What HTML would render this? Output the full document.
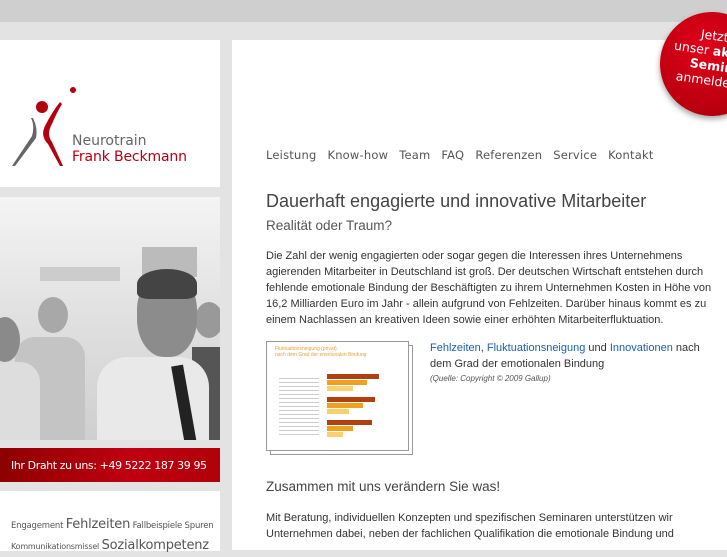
<!DOCTYPE html>
<html><head><meta charset="utf-8"><style>
*{margin:0;padding:0;box-sizing:border-box}
body{width:727px;height:545px;overflow:hidden;background:#e3e3e3;font-family:"Liberation Sans",sans-serif;position:relative}
.top{position:absolute;left:0;top:0;width:727px;height:22px;background:#cfcfcf}
.box{position:absolute;background:#fff}
.nav{position:absolute;left:266px;top:148px;color:#555;letter-spacing:.2px;font-family:"DejaVu Sans",sans-serif;font-size:11.5px}
.nav span{margin-right:11px}
h1{position:absolute;left:266px;top:191px;font-size:18px;font-weight:normal;color:#444}
h2{position:absolute;left:266px;top:218px;font-size:13.5px;font-weight:normal;color:#555}
p{position:absolute;left:266px;font-size:11px;line-height:16px;color:#333}
a{color:#1b5fa8;text-decoration:none}
</style></head><body>
<div class="top"></div>
<div class="box" style="left:0;top:40px;width:220px;height:147px">
<svg width="220" height="147" style="position:absolute;left:0;top:0">
<circle cx="73" cy="50" r="3" fill="#b30010"/>
<circle cx="42" cy="67" r="6" fill="#b30010"/>
<path d="M31 78 Q35 86 32 96 L12 126 L15 126 L36 98 Q38 88 33 78Z" fill="#666"/>
<path d="M60 62 Q52 72 45 86 Q40 96 48 104 L60 126 L63 126 L52 102 Q46 94 52 84 Q56 74 62 64Z" fill="#b30010"/>
<text x="72" y="105" font-family="DejaVu Sans,sans-serif" font-size="14" fill="#666">Neurotrain</text>
<text x="72" y="121" font-family="DejaVu Sans,sans-serif" font-size="14" fill="#b30010" textLength="115">Frank Beckmann</text>
</svg></div>
<div class="box" style="left:0;top:197px;width:220px;height:243px;background:linear-gradient(180deg,#f4f4f4,#e0e0e0 50%,#cfcfcf);overflow:hidden">
<div style="position:absolute;left:142px;top:50px;width:55px;height:30px;background:#bbb"></div>
<div style="position:absolute;left:40px;top:70px;width:80px;height:14px;background:#ccc"></div>
<div style="position:absolute;left:38px;top:100px;width:30px;height:36px;border-radius:50%;background:#a8a8a8"></div>
<div style="position:absolute;left:15px;top:140px;width:70px;height:110px;border-radius:20px 20px 0 0;background:#c4c4c4"></div>
<div style="position:absolute;left:-10px;top:120px;width:30px;height:45px;border-radius:50%;background:#8a8a8a"></div>
<div style="position:absolute;left:-10px;top:165px;width:50px;height:90px;border-radius:20px 20px 0 0;background:#ddd"></div>
<div style="position:absolute;left:195px;top:105px;width:28px;height:36px;border-radius:50%;background:#999"></div>
<div style="position:absolute;left:192px;top:150px;width:30px;height:100px;background:#555"></div>
<div style="position:absolute;left:137px;top:75px;width:60px;height:85px;border-radius:45%;background:#8c8c8c"></div>
<div style="position:absolute;left:137px;top:72px;width:60px;height:30px;border-radius:50% 50% 20% 20%;background:#444"></div>
<div style="position:absolute;left:97px;top:160px;width:112px;height:90px;border-radius:30px 30px 0 0;background:#e9e9e9"></div>
<div style="position:absolute;left:178px;top:168px;width:12px;height:80px;background:#222;transform:rotate(-10deg)"></div>
</div>
<div style="position:absolute;left:0;top:448px;width:220px;height:34px;background:linear-gradient(90deg,#8e0000,#c00010 60%,#b00008);color:#fff;font-family:'DejaVu Sans',sans-serif;font-size:11px;letter-spacing:-0.4px;padding:11px 0 0 11px;white-space:nowrap">Ihr Draht zu uns: +49 5222 187 39 95</div>
<div class="box" style="left:0;top:491px;width:220px;height:60px;color:#555;font-family:'DejaVu Sans',sans-serif;font-size:8.5px;line-height:20px;padding:24px 0 0 11px;white-space:nowrap;letter-spacing:-0.2px">Engagement <span style="font-size:13px">Fehlzeiten</span> Fallbeispiele Spuren<br><span style="font-size:8px">Kommunikationsmissel</span> <span style="font-size:13px">Sozialkompetenz</span></div>
<div class="box" style="left:232px;top:40px;width:495px;height:510px"></div>
<div class="nav"><span>Leistung</span><span>Know-how</span><span>Team</span><span>FAQ</span><span>Referenzen</span><span>Service</span><span>Kontakt</span></div>
<h1>Dauerhaft engagierte und innovative Mitarbeiter</h1>
<h2>Realität oder Traum?</h2>
<p style="top:248px;width:447px">Die Zahl der wenig engagierten oder sogar gegen die Interessen ihres Unternehmens agierenden Mitarbeiter in Deutschland ist groß. Der deutschen Wirtschaft entstehen durch fehlende emotionale Bindung der Beschäftigten zu ihrem Unternehmen Kosten in Höhe von 16,2 Milliarden Euro im Jahr - allein aufgrund von Fehlzeiten. Darüber hinaus kommt es zu einem Nachlassen an kreativen Ideen sowie einer erhöhten Mitarbeiterfluktuation.</p>
<div style="position:absolute;left:270px;top:345px;width:143px;height:110px;background:#fff;border:1px solid #999"></div>
<div style="position:absolute;left:266px;top:341px;width:143px;height:110px;background:#fff;border:1px solid #999;overflow:hidden">
<div style="position:absolute;left:8px;top:4px;font-size:5px;color:#e8a040;line-height:6px">Fluktuationsneigung (privat)<br>nach dem Grad der emotionalen Bindung</div>
<div style="position:absolute;left:60px;top:32px;width:52px;height:5px;background:#b04010"></div>
<div style="position:absolute;left:60px;top:38px;width:40px;height:5px;background:#f0a020"></div>
<div style="position:absolute;left:60px;top:44px;width:26px;height:5px;background:#f8d070"></div>
<div style="position:absolute;left:60px;top:55px;width:48px;height:5px;background:#b04010"></div>
<div style="position:absolute;left:60px;top:61px;width:36px;height:5px;background:#f0a020"></div>
<div style="position:absolute;left:60px;top:67px;width:22px;height:5px;background:#f8d070"></div>
<div style="position:absolute;left:60px;top:78px;width:45px;height:5px;background:#b04010"></div>
<div style="position:absolute;left:60px;top:84px;width:26px;height:5px;background:#f0a020"></div>
<div style="position:absolute;left:60px;top:90px;width:16px;height:5px;background:#f8d070"></div>
<div style="position:absolute;left:12px;top:36px;width:40px;height:60px;background:repeating-linear-gradient(180deg,#ccc 0 1px,#fff 1px 4px)"></div>
</div>
<p style="top:340px;left:430px;width:270px;"><a>Fehlzeiten</a>, <a>Fluktuationsneigung</a> und <a>Innovationen</a> nach dem Grad der emotionalen Bindung<br><i style="font-size:8px;color:#555;line-height:12px;position:relative;top:-2px">(Quelle: Copyright © 2009 Gallup)</i></p>
<h2 style="top:479px;font-size:13.5px;color:#444">Zusammen mit uns verändern Sie was!</h2>
<p style="top:510px;width:447px">Mit Beratung, individuellen Konzepten und spezifischen Seminaren unterstützen wir Unternehmen dabei, neben der fachlichen Qualifikation die emotionale Bindung und</p>
<div style="position:absolute;left:660px;top:12px;width:104px;height:104px;border-radius:50%;background:radial-gradient(circle at 40% 35%,#e0001a,#b8000e 70%,#9a0008);box-shadow:0 3px 6px rgba(0,0,0,.35);transform:rotate(8deg);color:#fff;font-family:'DejaVu Sans',sans-serif;font-size:12.5px;line-height:15px;padding:16px 0 0 12px;white-space:nowrap">
<div style="padding-left:25px">Jetzt f</div><div>unser <b>aktu</b></div><div style="padding-left:18px"><b>Semina</b></div><div style="padding-left:6px">anmelde</div></div>
</body></html>
